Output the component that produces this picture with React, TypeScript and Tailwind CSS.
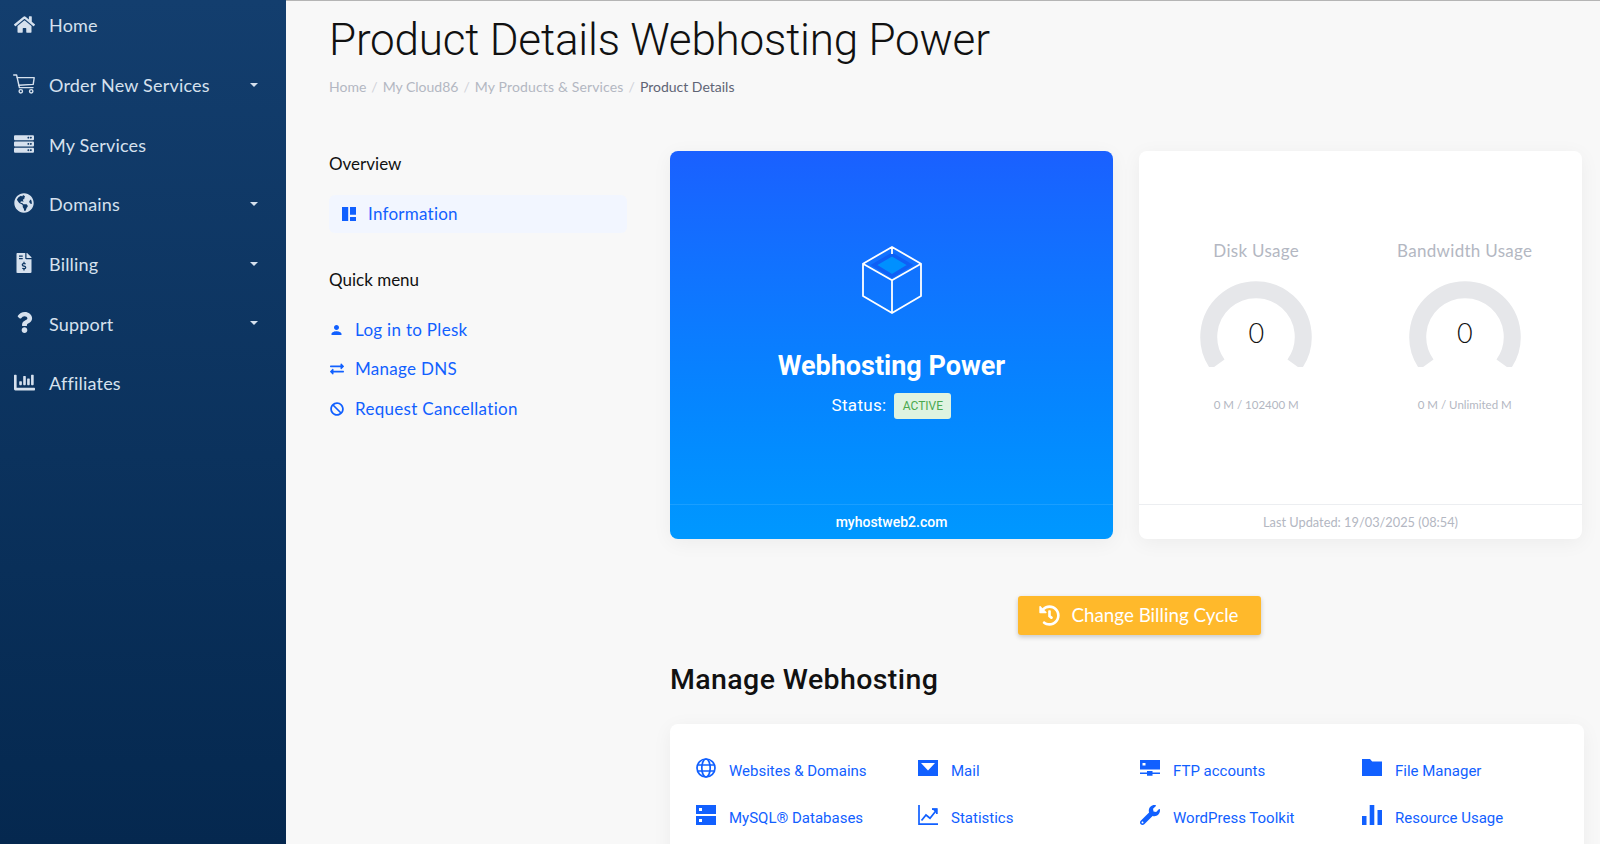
import React from "react";
import { FaHome, FaServer, FaGlobeAmericas, FaFileInvoiceDollar, FaQuestion, FaChartBar, FaExchangeAlt, FaBan, FaHistory, FaWrench } from "react-icons/fa";
import { MdPerson } from "react-icons/md";

function CartIcon({ size = 22 }: { size?: number }) {
  return (
    <svg width={size} height={size} viewBox="0 0 22 20" fill="none" stroke="currentColor" strokeWidth="1.4" strokeLinejoin="round" strokeLinecap="round">
      <path d="M0.7 1H3.6L6.4 13.6H20" />
      <path d="M4.2 3.6H21.2L20.2 10.4L5.7 11.2" />
      <circle cx="7.8" cy="17.3" r="1.7" />
      <circle cx="18.2" cy="17.3" r="1.7" />
    </svg>
  );
}

const nav = [
  { t: "Home", I: FaHome, s: 21, c: false },
  { t: "Order New Services", I: CartIcon, s: 22, c: true },
  { t: "My Services", I: FaServer, s: 20, c: false },
  { t: "Domains", I: FaGlobeAmericas, s: 20, c: true },
  { t: "Billing", I: FaFileInvoiceDollar, s: 20, c: true },
  { t: "Support", I: FaQuestion, s: 21, c: true },
  { t: "Affiliates", I: FaChartBar, s: 21, c: false },
];

const B = "#1160ff";
const GlobeI = () => (
  <svg width="20" height="20" viewBox="0 0 20 20" fill="none" stroke={B} strokeWidth="1.7">
    <circle cx="10" cy="10" r="9" /><ellipse cx="10" cy="10" rx="4.2" ry="9" /><path d="M1.6 7h16.8M1.6 13h16.8" />
  </svg>
);
const MailI = () => (
  <svg width="20" height="20" viewBox="0 0 20 20">
    <path fillRule="evenodd" fill={B} d="M0 2h20v16H0zM3 5l7 7.5L17 5z" />
  </svg>
);
const FtpI = () => (
  <svg width="20" height="20" viewBox="0 0 20 20" fill={B}>
    <path fillRule="evenodd" d="M0 2h20v9.5H0zM2.5 5v2.6h3V5z" />
    <path d="M0 14.5h7V13h5.5v1.5H20V16h-7.5v1.7H7V16H0z" />
  </svg>
);
const FolderI = () => (
  <svg width="20" height="20" viewBox="0 0 20 20" fill={B}><path d="M0 1h8l2.2 2.4H20V18H0z" /></svg>
);
const DbI = () => (
  <svg width="20" height="20" viewBox="0 0 20 20">
    <path fillRule="evenodd" fill={B} d="M0 0h20v9H0zM3 3v3h3V3zM0 11h20v9H0zM3 14v3h3v-3z" />
  </svg>
);
const StatsI = () => (
  <svg width="20" height="20" viewBox="0 0 20 20" fill="none" stroke={B} strokeWidth="1.7">
    <path d="M1 0v19.1h19" /><path d="M3.5 15.5 8 10l4 3.2 6-7.5" /><path d="M13.8 3.6h5.4V9" fill={B} stroke="none" />
    <path d="M14 4.2h4.8v4.8" fill="none" />
  </svg>
);
const WrenchI = () => <FaWrench size={20} color={B} />;
const BarsI = () => (
  <svg width="20" height="20" viewBox="0 0 20 20" fill={B}><path d="M0 11h4.5v9H0zM7.7 0h4.6v20H7.7zM15.5 5H20v15h-4.5z" /></svg>
);

const tools = [
  { t: "Websites & Domains", I: GlobeI },
  { t: "Mail", I: MailI },
  { t: "FTP accounts", I: FtpI },
  { t: "File Manager", I: FolderI },
  { t: "MySQL® Databases", I: DbI },
  { t: "Statistics", I: StatsI },
  { t: "WordPress Toolkit", I: WrenchI },
  { t: "Resource Usage", I: BarsI },
];

function Gauge() {
  return (
    <div className="relative h-[86px] w-[112px]">
      <svg width="112" height="86" viewBox="0 0 112 86">
        <path d="M17.6 83.5A47.25 47.25 0 1 1 94.4 83.5" fill="none" stroke="#e6e7ea" strokeWidth="17" />
      </svg>
      <div className="absolute left-0 right-0 top-[32px] text-center text-[27px] leading-[40px] font-light text-[#111]">0</div>
    </div>
  );
}

export default function App() {
  return (
    <div className="flex h-[844px] w-[1600px] overflow-hidden bg-[#f8f8f8] font-['Lato','Liberation_Sans',sans-serif]">
      <aside className="w-[286px] shrink-0 bg-gradient-to-b from-[#133e6e] to-[#05284f] pl-[13px] pr-[28px] text-[#d6e1ee]">
        {nav.map(({ t, I, s, c }) => (
          <div key={t} className="flex h-[59.7px] items-center first:-mt-[4px]">
            <div className="-mt-[3px] mr-[14px] flex w-[22px] shrink-0 justify-center"><I size={s} /></div>
            <span className="flex-1 text-[18px] tracking-[0.2px]">{t}</span>
            {c && <span className="-mt-[2px] h-0 w-0 border-x-[4px] border-t-[4px] border-x-transparent border-t-[#d6e1ee]" />}
          </div>
        ))}
      </aside>

      <main className="relative flex-1 border-t border-[#b5b5b5] pl-[43px] pr-[17px]">
        <h1 className="mt-[14px] font-['Roboto',sans-serif] text-[44px] leading-[50px] font-light tracking-[-0.2px] text-[#111]">Product Details Webhosting Power</h1>
        <nav className="mt-[12px] flex items-center gap-[5px] text-[14px] leading-[20px] text-[#b3b7c2]">
          <span>Home</span><span className="text-[#d0d2d8]">/</span>
          <span>My Cloud86</span><span className="text-[#d0d2d8]">/</span>
          <span className="tracking-[0.15px]">My Products &amp; Services</span><span className="text-[#d0d2d8]">/</span>
          <span className="text-[#5f6475]">Product Details</span>
        </nav>

        <div className="mt-[54px] flex">
          <div className="w-[298px] shrink-0 pt-[1px]">
            <h3 className="text-[17px] leading-[24px] text-[#111]">Overview</h3>
            <div className="mt-[19px] flex h-[38px] items-center gap-[12px] rounded-[6px] bg-[#f2f6ff] pl-[13px] text-[17px] tracking-[0.25px] text-[#1160ff]">
              <svg width="14" height="14" viewBox="0 0 14 14" fill="#1160ff"><path d="M0 0h6.2v14H0zM8 0h6v7.8H8zM8 10h6v4H8z" /></svg>
              <span>Information</span>
            </div>
            <h3 className="mt-[35px] text-[17px] leading-[24px] text-[#111]">Quick menu</h3>
            <div className="mt-[26px] flex flex-col gap-[15.3px] text-[17px] leading-[24px] tracking-[0.3px] text-[#1160ff]">
              <div className="flex items-center"><span className="mr-[11px] flex w-[15px] justify-center"><MdPerson size={18} /></span><span>Log in to Plesk</span></div>
              <div className="flex items-center"><span className="mr-[11px] flex w-[15px] justify-center"><FaExchangeAlt size={14} /></span><span>Manage DNS</span></div>
              <div className="flex items-center"><span className="mr-[11px] flex w-[15px] justify-center"><FaBan size={14} /></span><span>Request Cancellation</span></div>
            </div>
          </div>

          <div className="ml-[43px] flex-1 pr-[2px]">
            <div className="flex gap-[26px]">
              <div className="flex h-[388px] w-[443px] flex-col overflow-hidden rounded-[8px] bg-gradient-to-b from-[#1a60ff] to-[#0098ff] text-white shadow-[0_4px_20px_rgba(0,0,0,0.05)]">
                <div className="flex flex-1 flex-col items-center pt-[94px]">
                  <svg width="62" height="70" viewBox="0 0 62 70" fill="none">
                    <path d="M31 9.5 49 20 31 31 13 20z" fill="#0090ff" stroke="#0f5ff5" strokeWidth="3.5" />
                    <path d="M31 2 60 18.7V51L31 68 2 51V18.7zM2 18.7 31 35.3 60 18.7M31 35.3V68M31 2v7" stroke="#fff" strokeWidth="1.8" strokeLinejoin="round" />
                  </svg>
                  <div className="mt-[33px] font-['Roboto',sans-serif] text-[27px] leading-[36px] font-bold">Webhosting Power</div>
                  <div className="mt-[9px] flex items-center gap-[8px]">
                    <span className="font-['Roboto',sans-serif] text-[17px] tracking-[0.3px]">Status:</span>
                    <span className="flex h-[26px] w-[57px] items-center justify-center rounded-[3px] bg-[#dff3e0] font-['Roboto',sans-serif] text-[12px] text-[#4aa84f]">ACTIVE</span>
                  </div>
                </div>
                <div className="flex h-[35px] items-center justify-center border-t border-white/10 font-['Roboto',sans-serif] text-[14px] font-medium">myhostweb2.com</div>
              </div>

              <div className="flex h-[388px] w-[443px] flex-col overflow-hidden rounded-[8px] bg-white shadow-[0_4px_20px_rgba(0,0,0,0.05)]">
                <div className="grid flex-1 grid-cols-2 px-[13px] pt-[88px]">
                  {[["Disk Usage", "0 M / 102400 M"], ["Bandwidth Usage", "0 M / Unlimited M"]].map(([a, b]) => (
                    <div key={a} className="flex flex-col items-center">
                      <div className="text-[17px] leading-[24px] tracking-[0.3px] text-[#b3b7c2]">{a}</div>
                      <div className="mt-[18px]"><Gauge /></div>
                      <div className="mt-[29px] text-[11.5px] leading-[18px] text-[#b3b7c2]">{b}</div>
                    </div>
                  ))}
                </div>
                <div className="flex h-[35px] items-center justify-center border-t border-[#eceef1] pt-[1px] text-[12.8px] text-[#b3b7c2]">Last Updated: 19/03/2025 (08:54)</div>
              </div>
            </div>

            <div className="mt-[57px] flex justify-center pl-[24px]">
              <div className="flex h-[39px] w-[243px] items-center justify-center gap-[11px] rounded-[3px] bg-[#ffb92b] text-[18.8px] text-white shadow-[0_2px_5px_rgba(0,0,0,0.2)]">
                <FaHistory size={21} /><span>Change Billing Cycle</span>
              </div>
            </div>

            <h2 className="mt-[25px] font-['Roboto',sans-serif] text-[28.5px] leading-[40px] font-medium tracking-[0.4px] text-[#111]">Manage Webhosting</h2>

            <div className="mt-[24px] h-[200px] rounded-t-[8px] bg-white pl-[26px] pt-[35px] shadow-[0_4px_20px_rgba(0,0,0,0.05)]">
              <div className="grid grid-cols-[222px_222px_222px_222px] gap-y-[23px] font-['Roboto',sans-serif] text-[15px] leading-[24px] text-[#1160ff]">
                {tools.map(({ t, I }) => (
                  <div key={t} className="flex items-center gap-[13px]">
                    <div className="-mt-[6px] shrink-0"><I /></div>
                    <span>{t}</span>
                  </div>
                ))}
              </div>
            </div>
          </div>
        </div>
      </main>
    </div>
  );
}
